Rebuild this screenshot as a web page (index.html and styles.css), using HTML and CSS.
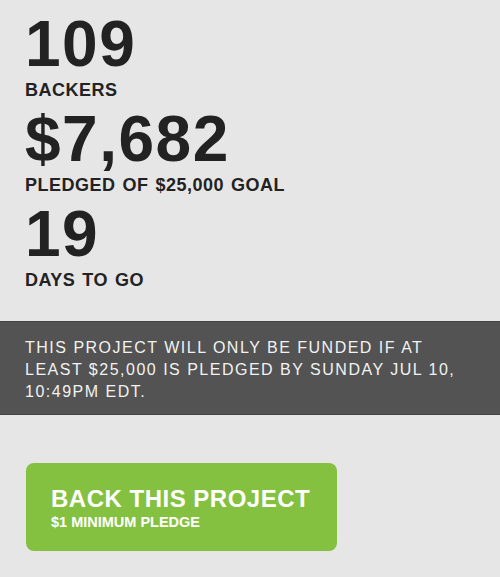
FILE: index.html
```html
<!DOCTYPE html>
<html lang="en">
<head>
  <meta charset="UTF-8">
  <title>Project Stats</title>
  <link rel="stylesheet" href="styles.css">
</head>
<body>

  <div class="stats">
    <div class="stat">
      <div class="stat-num">109</div>
      <div class="stat-label">Backers</div>
    </div>
    <div class="stat">
      <div class="stat-num">$7,682</div>
      <div class="stat-label">Pledged of $25,000 goal</div>
    </div>
    <div class="stat">
      <div class="stat-num">19</div>
      <div class="stat-label">Days to go</div>
    </div>
  </div>

  <div class="notice">
    This project will only be funded if at least $25,000 is pledged by Sunday Jul 10, 10:49pm EDT.
  </div>

  <a href="#" class="back-btn">
    <span class="back-title">Back this project</span>
    <span class="back-sub">$1 minimum pledge</span>
  </a>

</body>
</html>
```

FILE: styles.css
```css
body {
  margin: 0;
  background-color: #e6e6e6;
  font-family: "Liberation Sans", Arial, sans-serif;
  color: #222;
}
.stats {
  padding: 16px 25px 10px;
}
.stat-num {
  font-size: 64px;
  line-height: 56px;
  font-weight: bold;
  letter-spacing: 1.5px;
}
.stat-label {
  margin: 7px 0 10px;
  font-size: 18px;
  line-height: 22px;
  font-weight: bold;
  text-transform: uppercase;
  letter-spacing: 0.5px;
  word-spacing: 1.5px;
}
.stat:last-child .stat-label {
  margin-bottom: 0;
}
.notice {
  margin-top: 20px;
  padding: 15px 25px 11px;
  background-color: #535353;
  border-top: 1px solid #464646;
  border-bottom: 1px solid #464646;
  color: #f2f2f2;
  font-size: 16px;
  line-height: 22px;
  letter-spacing: 1.5px;
  text-transform: uppercase;
}
.back-btn {
  display: block;
  box-sizing: border-box;
  width: 311px;
  margin: 48px 0 0 26px;
  padding: 23px 25px 20px;
  background-color: #85c141;
  border-radius: 8px;
  color: #fff;
  text-decoration: none;
  text-transform: uppercase;
  font-weight: bold;
}
.back-title {
  display: block;
  font-size: 24px;
  line-height: 26px;
  letter-spacing: 0.5px;
}
.back-sub {
  display: block;
  margin-top: 1px;
  font-size: 14.5px;
  line-height: 18px;
}
```
